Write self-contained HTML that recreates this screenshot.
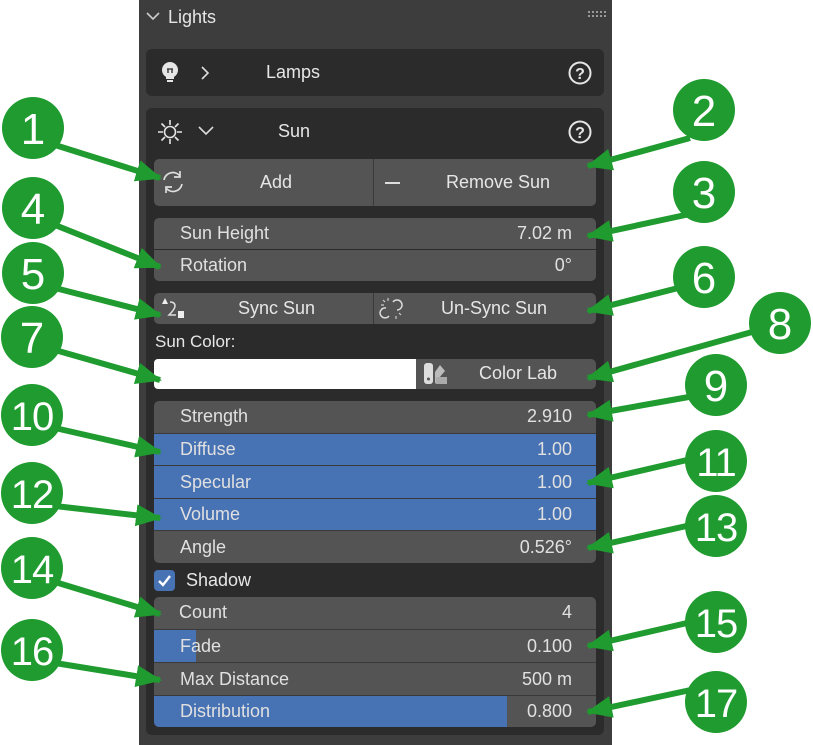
<!DOCTYPE html>
<html><head><meta charset="utf-8"><style>
body{margin:0;width:813px;height:745px;background:#fff;position:relative;overflow:hidden;font-family:"Liberation Sans",sans-serif;}
.p{position:absolute;left:139px;top:0;width:473px;height:745px;background:#3d3d3d;}
.box{position:absolute;left:146px;width:458px;background:#2b2b2b;border-radius:6px;}
.row{position:absolute;left:154px;width:442px;height:31px;background:#545454;color:#e0e0e0;font-size:18px;box-sizing:border-box;}
.row .l{position:absolute;left:26px;top:5px;}
.row .r{position:absolute;right:24px;top:5px;}
.blue{background:#4772b3;}
.t{position:absolute;color:#e6e6e6;font-size:18px;}
svg.o{position:absolute;left:0;top:0;}
</style></head><body>
<div class="p"></div>
<svg style="position:absolute;left:146px;top:11px" width="14" height="10"><path d="M1 2 L7 8 L13 2" stroke="#ccc" stroke-width="1.6" fill="none"/></svg>
<div class="t" style="left:168px;top:7px;font-size:18px;">Lights</div>
<svg style="position:absolute;left:588px;top:11px" width="20" height="8"><g fill="#999"><rect x="0" y="0" width="2" height="2"/><rect x="4" y="0" width="2" height="2"/><rect x="8" y="0" width="2" height="2"/><rect x="12" y="0" width="2" height="2"/><rect x="16" y="0" width="2" height="2"/><rect x="0" y="4" width="2" height="2"/><rect x="4" y="4" width="2" height="2"/><rect x="8" y="4" width="2" height="2"/><rect x="12" y="4" width="2" height="2"/><rect x="16" y="4" width="2" height="2"/></g></svg>

<div class="box" style="top:49px;height:47px;"></div>
<svg style="position:absolute;left:160px;top:60px" width="20" height="26"><circle cx="10" cy="10" r="8" fill="#e6e6e6"/><rect x="6" y="16" width="8" height="3" fill="#e6e6e6"/><rect x="7" y="20" width="6" height="2" fill="#e6e6e6"/><path d="M7 9 h6 M8 9 v4 M12 9 v4" stroke="#2b2b2b" stroke-width="1.3"/></svg>
<svg style="position:absolute;left:200px;top:66px" width="10" height="14"><path d="M2 1 L8 7 L2 13" stroke="#ddd" stroke-width="1.6" fill="none"/></svg>
<div class="t" style="left:266px;top:62px;">Lamps</div>
<svg style="position:absolute;left:568px;top:61px" width="24" height="24"><circle cx="12" cy="12" r="10.5" stroke="#e6e6e6" stroke-width="2" fill="none"/><text x="12" y="18" font-size="16" font-weight="bold" fill="#e6e6e6" text-anchor="middle" font-family="Liberation Sans">?</text></svg>

<div class="box" style="top:108px;height:627px;"></div>
<svg style="position:absolute;left:157px;top:119px" width="26" height="26"><circle cx="13" cy="13" r="5.5" stroke="#e6e6e6" stroke-width="1.6" fill="none"/><g stroke="#e6e6e6" stroke-width="1.6"><path d="M13 1v5M13 20v5M1 13h5M20 13h5M4.5 4.5l3.5 3.5M18 18l3.5 3.5M4.5 21.5l3.5-3.5M18 8l3.5-3.5"/></g></svg>
<svg style="position:absolute;left:198px;top:126px" width="16" height="10"><path d="M1 1 L8 8 L15 1" stroke="#ddd" stroke-width="1.6" fill="none"/></svg>
<div class="t" style="left:278px;top:121px;">Sun</div>
<svg style="position:absolute;left:568px;top:120px" width="24" height="24"><circle cx="12" cy="12" r="10.5" stroke="#e6e6e6" stroke-width="2" fill="none"/><text x="12" y="18" font-size="16" font-weight="bold" fill="#e6e6e6" text-anchor="middle" font-family="Liberation Sans">?</text></svg>

<div class="row" style="top:159px;height:47px;border-radius:5px;"></div>
<div style="position:absolute;left:373px;top:159px;width:1px;height:47px;background:#3a3a3a"></div>
<svg style="position:absolute;left:161px;top:170px" width="24" height="24"><path d="M3 10 A9 9 0 0 1 19 6 M21 14 A9 9 0 0 1 5 18" stroke="#ddd" stroke-width="1.7" fill="none"/><path d="M19 1 v6 h-6 M5 23 v-6 h6" stroke="#ddd" stroke-width="1.7" fill="none"/></svg>
<div class="t" style="left:260px;top:172px;">Add</div>
<div style="position:absolute;left:385px;top:182px;width:15px;height:2px;background:#ddd"></div>
<div class="t" style="left:446px;top:172px;">Remove Sun</div>

<div class="row" style="top:218px;border-radius:5px 5px 0 0;"><span class="l">Sun Height</span><span class="r">7.02 m</span></div>
<div class="row" style="top:250px;border-radius:0 0 5px 5px;"><span class="l">Rotation</span><span class="r">0°</span></div>

<div class="row" style="top:293px;height:31px;border-radius:5px;"></div>
<div style="position:absolute;left:373px;top:293px;width:1px;height:31px;background:#3a3a3a"></div>
<svg style="position:absolute;left:159px;top:296px" width="28" height="26"><path d="M3 8 L6 2 L9 8Z" fill="#eee"/><path d="M11 6 q5 0 5 4 q0 3 -6 9 h7" stroke="#ddd" stroke-width="1.5" fill="none"/><rect x="19" y="15" width="6" height="7" fill="#eee"/></svg>
<div class="t" style="left:238px;top:298px;">Sync Sun</div>
<svg style="position:absolute;left:379px;top:296px" width="26" height="26"><path d="M14 6 a5 5 0 1 1 4 8 M10 20 a5 5 0 1 1 -3 -8" stroke="#ddd" stroke-width="1.5" fill="none"/><path d="M4 4 l2 2 M9 2 v3 M2 9 h3 M20 17 l2 2 M17 20 v3" stroke="#ccc" stroke-width="1.2"/></svg>
<div class="t" style="left:441px;top:298px;">Un-Sync Sun</div>

<div class="t" style="left:155px;top:332px;font-size:17px;">Sun Color:</div>
<div style="position:absolute;left:154px;top:359px;width:262px;height:30px;background:#fff;border-radius:4px 0 0 4px;"></div>
<div class="row" style="left:416px;width:180px;top:359px;height:30px;border-radius:0 5px 5px 0;"></div>
<svg style="position:absolute;left:423px;top:362px" width="26" height="24"><rect x="1" y="1" width="9" height="21" rx="3" fill="#ddd"/><circle cx="5.5" cy="17" r="1.5" fill="#545454"/><path d="M12 22 L12 10 L17 3 L22 9 L16 16" fill="#bbb"/><rect x="13" y="15" width="11" height="7" fill="#aaa"/></svg>
<div class="t" style="left:479px;top:363px;">Color Lab</div>

<div class="row" style="top:401px;height:32px;border-radius:5px 5px 0 0;"><span class="l">Strength</span><span class="r">2.910</span></div>
<div class="row blue" style="top:433px;height:32px;border-top:1px solid #3a3a3a"><span class="l">Diffuse</span><span class="r">1.00</span></div>
<div class="row blue" style="top:465px;height:33px;border-top:1px solid #3a3a3a"><span class="l" style="top:6px">Specular</span><span class="r" style="top:6px">1.00</span></div>
<div class="row blue" style="top:498px;height:32px;border-top:1px solid #3a3a3a"><span class="l">Volume</span><span class="r">1.00</span></div>
<div class="row" style="top:530px;height:33px;border-radius:0 0 5px 5px;border-top:1px solid #3a3a3a"><span class="l" style="top:6px">Angle</span><span class="r" style="top:6px">0.526°</span></div>

<div style="position:absolute;left:154px;top:570px;width:21px;height:21px;background:#4772b3;border-radius:4px;"></div>
<svg style="position:absolute;left:156px;top:572px" width="18" height="18"><path d="M3 9 L7 13 L14 4" stroke="#fff" stroke-width="2.4" fill="none"/></svg>
<div class="t" style="left:186px;top:570px;">Shadow</div>

<div class="row" style="top:597px;height:32px;border-radius:5px 5px 0 0;"><span class="l" style="left:25px">Count</span><span class="r">4</span></div>
<div class="row" style="top:629px;height:33px;border-top:1px solid #3a3a3a"><div style="position:absolute;left:0;top:0;width:42px;height:32px;background:#4772b3"></div><span class="l" style="top:6px">Fade</span><span class="r" style="top:6px">0.100</span></div>
<div class="row" style="top:662px;height:33px;border-top:1px solid #3a3a3a"><span class="l" style="top:6px">Max Distance</span><span class="r" style="top:6px">500 m</span></div>
<div class="row" style="top:695px;height:32px;border-radius:0 0 5px 5px;border-top:1px solid #3a3a3a;overflow:hidden"><div style="position:absolute;left:0;top:0;width:353px;height:32px;background:#4772b3"></div><span class="l">Distribution</span><span class="r">0.800</span></div>

<svg class="o" width="813" height="745">
<defs><marker id="a" markerUnits="userSpaceOnUse" markerWidth="26" markerHeight="22" refX="24" refY="11" orient="auto"><path d="M0 0 L26 11 L0 22 Z" fill="#1f9b2f"/></marker></defs>
<g stroke="#1f9b2f" stroke-width="6" marker-end="url(#a)" fill="none">
<line x1="55" y1="145" x2="160" y2="178"/>
<line x1="55" y1="225" x2="160" y2="267"/>
<line x1="55" y1="288" x2="160" y2="315"/>
<line x1="55" y1="350" x2="160" y2="380"/>
<line x1="55" y1="428" x2="160" y2="452"/>
<line x1="55" y1="506" x2="160" y2="518"/>
<line x1="55" y1="582" x2="160" y2="614"/>
<line x1="55" y1="663" x2="160" y2="680"/>
<line x1="690" y1="138" x2="588" y2="166"/>
<line x1="690" y1="214" x2="588" y2="236"/>
<line x1="690" y1="285" x2="588" y2="311"/>
<line x1="752" y1="332" x2="588" y2="378"/>
<line x1="700" y1="395" x2="588" y2="415"/>
<line x1="700" y1="457" x2="588" y2="483"/>
<line x1="700" y1="523" x2="588" y2="548"/>
<line x1="700" y1="620" x2="588" y2="646"/>
<line x1="700" y1="688" x2="588" y2="712"/>
</g>
<g fill="#1f9b2f">
<circle cx="33" cy="128" r="31"/><circle cx="33" cy="208" r="31"/><circle cx="33" cy="273" r="31"/><circle cx="32" cy="337" r="31"/><circle cx="32" cy="415" r="31"/><circle cx="32" cy="493" r="31"/><circle cx="32" cy="568" r="31"/><circle cx="32" cy="650" r="31"/>
<circle cx="704" cy="110" r="31"/><circle cx="704" cy="192" r="31"/><circle cx="704" cy="277" r="31"/><circle cx="780" cy="323" r="31"/><circle cx="716" cy="385" r="31"/><circle cx="716" cy="461" r="31"/><circle cx="716" cy="526" r="31"/><circle cx="716" cy="622" r="31"/><circle cx="716" cy="702" r="31"/>
</g>
<g fill="#fff" font-family="Liberation Sans" font-size="44" text-anchor="middle">
<text x="33" y="144">1</text><text x="33" y="224">4</text><text x="33" y="289">5</text><text x="32" y="353">7</text><text x="32" y="430" font-size="40" letter-spacing="-1">10</text><text x="32" y="508" font-size="40" letter-spacing="-1">12</text><text x="32" y="583" font-size="40" letter-spacing="-1">14</text><text x="32" y="665" font-size="40" letter-spacing="-1">16</text>
<text x="704" y="126">2</text><text x="704" y="208">3</text><text x="704" y="293">6</text><text x="780" y="339">8</text><text x="716" y="401">9</text><text x="716" y="476" font-size="40" letter-spacing="-1">11</text><text x="716" y="541" font-size="40" letter-spacing="-1">13</text><text x="716" y="637" font-size="40" letter-spacing="-1">15</text><text x="716" y="717" font-size="40" letter-spacing="-1">17</text>
</g>
</svg>
</body></html>
